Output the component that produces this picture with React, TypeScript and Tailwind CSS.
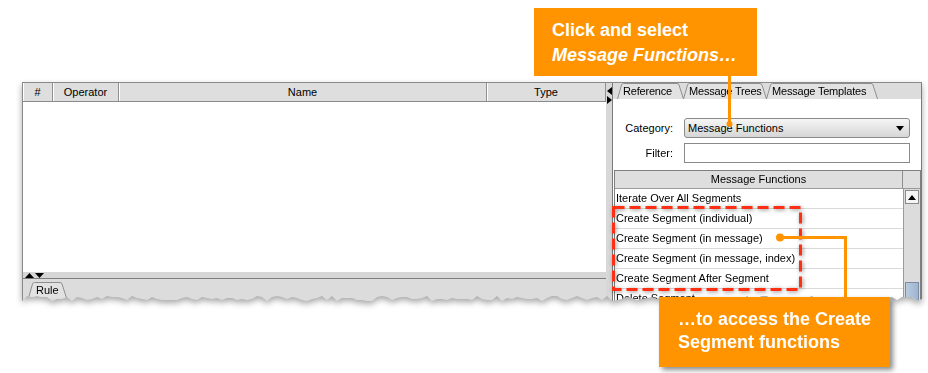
import React from 'react';

const UI = "font-['Liberation_Sans',Arial,sans-serif] text-[11px] text-black";
const CALLOUT = "font-['Liberation_Sans',Arial,sans-serif] font-bold text-white";

const functions = [
  'Iterate Over All Segments',
  'Create Segment (individual)',
  'Create Segment (in message)',
  'Create Segment (in message, index)',
  'Create Segment After Segment',
  'Delete Segment',
];

// ragged bottom edge of the clipped screenshot
function tornClip(width: number, height: number) {
  let seed = 11;
  const rnd = () => {
    seed = (seed * 9301 + 49297) % 233280;
    return seed / 233280;
  };
  const pts: string[] = ['0px 0px', `${width + 10}px 0px`, `${width + 10}px ${height}px`];
  for (let x = width; x >= 0; x -= 5) {
    pts.push(`${x}px ${height - 6 + Math.round(rnd() * 5)}px`);
  }
  return `polygon(${pts.join(',')})`;
}

const Tri = ({ dir, size = 7 }: { dir: 'up' | 'down' | 'left' | 'right'; size?: number }) => {
  const s = size;
  const t = Math.round(size * 0.6);
  const horiz = dir === 'up' || dir === 'down';
  const d = {
    up: `M0 ${t} L${s / 2} 0 L${s} ${t} Z`,
    down: `M0 0 L${s} 0 L${s / 2} ${t} Z`,
    left: `M${t} 0 L${t} ${s} L0 ${s / 2} Z`,
    right: `M0 0 L0 ${s} L${t} ${s / 2} Z`,
  }[dir];
  return (
    <svg width={horiz ? s : t} height={horiz ? t : s} viewBox={horiz ? `0 0 ${s} ${t}` : `0 0 ${t} ${s}`}>
      <path d={d} fill="#000" />
    </svg>
  );
};

const TabShape = ({ w, h }: { w: number; h: number }) => (
  <svg width={w} height={h} viewBox={`0 0 ${w} ${h}`} className="absolute inset-0">
    <path
      d={`M0.5 ${h} L4.5 2 Q5 0.5 6.5 0.5 H${w - 7} Q${w - 5.5} 0.5 ${w - 5} 2 L${w - 0.5} ${h}`}
      fill="#e2e2e2"
      stroke="#8e8e8e"
    />
  </svg>
);

const Tab = ({ label, w, className }: { label: string; w: number; className: string }) => (
  <div className={`relative h-[16px] ${className}`}>
    <TabShape w={w} h={16} />
    <span className="relative block pl-[6px] leading-[16px] tracking-[-0.2px]">{label}</span>
  </div>
);

const HeaderCell = ({ children, className }: { children?: React.ReactNode; className: string }) => (
  <div className={`flex items-center justify-center border-r border-[#8f8f8f] shadow-[inset_1px_0_0_#fff] ${className}`}>
    {children}
  </div>
);

const LeftPanel = () => (
  <div className="flex w-[584px] flex-col border-l border-[#8a8a8a]">
    <div className="flex h-[19px] border-b border-[#8a8a8a] bg-[#dedede]">
      <HeaderCell className="w-[30px]">#</HeaderCell>
      <HeaderCell className="w-[66px]">Operator</HeaderCell>
      <HeaderCell className="w-[368px]">Name</HeaderCell>
      <HeaderCell className="flex-1">Type</HeaderCell>
    </div>
    <div className="h-[170px] bg-white" />
    <div className="flex h-[6px] items-end gap-[1px] bg-[#d6d6d6] pl-[2px]">
      <Tri dir="up" size={9} />
      <Tri dir="down" size={9} />
    </div>
    <div className="flex-1 border-t border-[#7c7c7c] bg-[#dcdcdc] pl-[5px] pt-[3px]">
      <div className="relative h-[16px] w-[39px]">
        <TabShape w={39} h={16} />
        <span className="relative block pl-[8px] leading-[16px]">Rule</span>
      </div>
    </div>
  </div>
);

const Splitter = () => (
  <div className="flex w-[6px] flex-col gap-[1px] bg-[#d8d8d8] pl-[1px] pt-[4px]">
    <Tri dir="left" size={8} />
    <Tri dir="right" size={8} />
  </div>
);

const RightPanel = () => (
  <div className="flex flex-1 flex-col border-l border-r border-[#7a7a7a]">
    <div className="flex h-[19px] items-end bg-[#dcdcdc] pl-[4px]">
      <Tab label="Reference" w={67} className="w-[67px]" />
      <Tab label="Message Trees" w={84} className="-ml-[1px] w-[84px]" />
      <Tab label="Message Templates" w={112} className="-ml-[1px] w-[112px]" />
    </div>
    <div className="flex-1 bg-white">
      <div className="mt-[19px] grid grid-cols-[60px_1fr] items-center gap-x-[11px] gap-y-[5px] pr-[11px]">
        <span className="text-right">Category:</span>
        <div className="flex h-[20px] items-center justify-between rounded-[3px] border border-[#8a8a8a] bg-gradient-to-b from-[#f6f6f6] to-[#d6d6d6] pl-[3px] pr-[5px]">
          <span>Message Functions</span>
          <Tri dir="down" size={8} />
        </div>
        <span className="text-right">Filter:</span>
        <div className="h-[20px] border border-[#8a8a8a] bg-white" />
      </div>
      <div className="ml-[1px] mt-[7px] border border-[#7f7f7f]">
        <div className="flex h-[18px] border-b border-[#9a9a9a] bg-[#dedede]">
          <div className="flex flex-1 items-center justify-center border-r border-[#8f8f8f]">Message Functions</div>
          <div className="w-[17px]" />
        </div>
        <div className="flex">
          <div className="flex-1">
            {functions.map((f) => (
              <div key={f} className="h-[20px] border-b border-[#dadada] pl-[1px] leading-[19px]">
                {f}
              </div>
            ))}
          </div>
          <div className="flex w-[17px] flex-col border-l border-[#9a9a9a] bg-[#dcdcdc] pl-[1px] pr-[1px] pt-[1px]">
            <div className="flex h-[14px] items-center justify-center border border-[#8a8a8a] bg-[#f4f4f4]">
              <Tri dir="up" size={8} />
            </div>
            <div className="mt-[78px] h-[40px] border border-[#7a8ca4] bg-gradient-to-r from-[#b9cbe0] to-[#9fb4cf]" />
          </div>
        </div>
      </div>
    </div>
  </div>
);

export default function App() {
  return (
    <div className={`relative h-[373px] w-[928px] overflow-hidden bg-white ${UI}`}>
      <div className="pl-[22px] pt-[82px]">
        <div className="[filter:drop-shadow(0_3px_3px_rgba(0,0,0,0.35))]">
          <div className="flex h-[220px] w-[900px] border-t border-[#8a8a8a]" style={{ clipPath: tornClip(900, 220) }}>
            <LeftPanel />
            <Splitter />
            <RightPanel />
          </div>
        </div>
      </div>

      <svg width="928" height="373" className="pointer-events-none absolute inset-0">
        <rect
          x="613.5"
          y="207.5"
          width="187"
          height="82"
          fill="none"
          stroke="#ff2f14"
          strokeWidth="3"
          strokeDasharray="11 5"
          style={{ filter: 'drop-shadow(1px 1px 2px rgba(0,0,0,0.45))' }}
        />
        <path d="M729.5 76 V124" stroke="#ff9400" strokeWidth="3" fill="none" />
        <circle cx="729.5" cy="124" r="3" fill="#ff9400" />
        <path d="M780 237.5 H845.5 V298" stroke="#ff9400" strokeWidth="3" fill="none" />
        <circle cx="780" cy="237.5" r="4" fill="#ff9400" />
      </svg>

      <div className={`absolute left-[534px] top-[8px] h-[68px] w-[223px] bg-[#ff9400] pl-[18px] pt-[10px] text-[18px] leading-[25px] ${CALLOUT}`}>
        <div>Click and select</div>
        <div className="italic">Message Functions…</div>
      </div>

      <div className={`absolute left-[659px] top-[297px] h-[70px] w-[231px] bg-[#ff9400] pl-[19px] pt-[11px] text-[18px] leading-[23px] shadow-[3px_3px_5px_rgba(0,0,0,0.45)] ${CALLOUT}`}>
        <div>…to access the Create</div>
        <div>Segment functions</div>
      </div>
    </div>
  );
}
